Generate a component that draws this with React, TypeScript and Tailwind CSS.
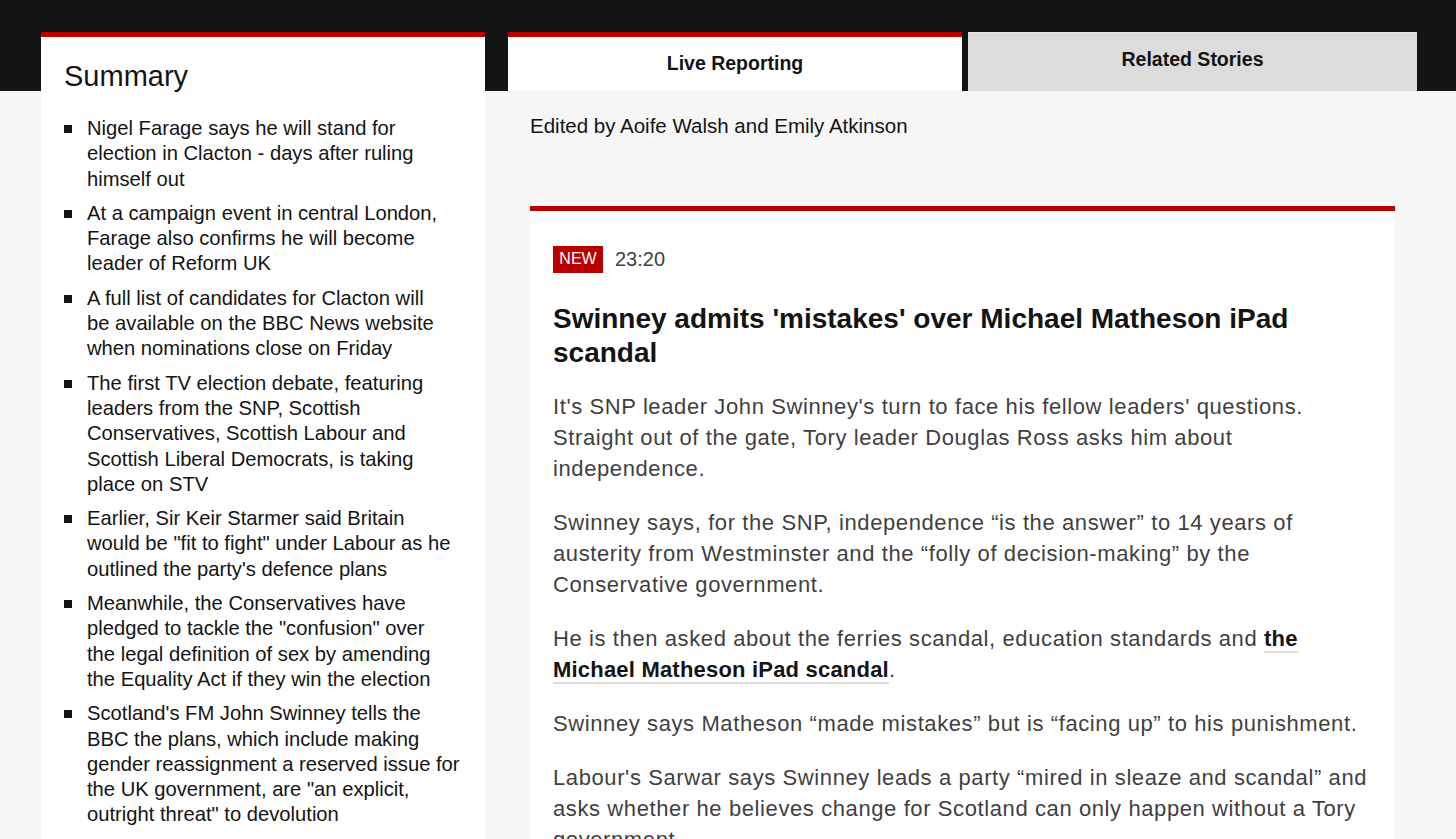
const summary = [
  ['Nigel Farage says he will stand for', 'election in Clacton - days after ruling', 'himself out'],
  ['At a campaign event in central London,', 'Farage also confirms he will become', 'leader of Reform UK'],
  ['A full list of candidates for Clacton will', 'be available on the BBC News website', 'when nominations close on Friday'],
  [
    'The first TV election debate, featuring',
    'leaders from the SNP, Scottish',
    'Conservatives, Scottish Labour and',
    'Scottish Liberal Democrats, is taking',
    'place on STV',
  ],
  ['Earlier, Sir Keir Starmer said Britain', 'would be "fit to fight" under Labour as he', "outlined the party's defence plans"],
  [
    'Meanwhile, the Conservatives have',
    'pledged to tackle the "confusion" over',
    'the legal definition of sex by amending',
    'the Equality Act if they win the election',
  ],
  [
    "Scotland's FM John Swinney tells the",
    'BBC the plans, which include making',
    'gender reassignment a reserved issue for',
    'the UK government, are "an explicit,',
    'outright threat" to devolution',
  ],
]

function Lines({ lines }: { lines: string[] }) {
  return (
    <span className="flex flex-col">
      {lines.map((l) => (
        <span key={l} className="whitespace-nowrap">
          {l}
        </span>
      ))}
    </span>
  )
}

function SummaryCard() {
  return (
    <aside className="w-[444px] shrink-0 border-t-[5px] border-[#b80000] bg-white px-[23px] pt-[22px] pb-10">
      <h2 className="text-[29px] leading-[34px] text-[#141414]">Summary</h2>
      <ul className="mt-[23px] flex flex-col gap-[9px]">
        {summary.map((item) => (
          <li key={item[0]} className="flex text-[20.2px] leading-[25.3px] text-[#141414]">
            <span className="mt-[9px] mr-[15px] h-[8px] w-[8px] shrink-0 bg-[#141414]" />
            <Lines lines={item} />
          </li>
        ))}
      </ul>
    </aside>
  )
}

function Tabs() {
  return (
    <div className="flex gap-[6px]">
      <div className="flex h-[59px] w-[454px] items-center justify-center border-t-[5px] border-[#b80000] bg-white text-[19.5px] font-bold text-[#141414]">
        Live Reporting
      </div>
      <div className="flex h-[59px] w-[449px] items-center justify-center border-t border-[#e4e4e4] bg-[#dcdcdc] pb-[4px] text-[19.5px] font-bold text-[#141414]">
        Related Stories
      </div>
    </div>
  )
}

function Article() {
  return (
    <article className="border-t-[5px] border-[#b80000] bg-white px-[23px] pt-[33px] pb-10">
      <div className="flex items-center gap-[12px]">
        <span className="flex h-[27px] w-[50px] items-center justify-center bg-[#b80000] text-[16px] text-white">
          NEW
        </span>
        <span className="text-[20px] text-[#3f3f42]">23:20</span>
      </div>
      <h3 className="mt-[28px] text-[28px] leading-[34px] font-bold text-[#141414]">
        Swinney admits 'mistakes' over Michael Matheson iPad
        <br />
        scandal
      </h3>
      <div className="mt-[21px] flex flex-col gap-[23px] text-[22px] leading-[31px] tracking-[0.6px] whitespace-nowrap text-[#3f3f42]">
        <p>
          It's SNP leader John Swinney's turn to face his fellow leaders' questions.
          <br />
          Straight out of the gate, Tory leader Douglas Ross asks him about
          <br />
          independence.
        </p>
        <p>
          Swinney says, for the SNP, independence “is the answer” to 14 years of
          <br />
          austerity from Westminster and the “folly of decision-making” by the
          <br />
          Conservative government.
        </p>
        <p>
          He is then asked about the ferries scandal, education standards and{' '}
          <a className="border-b-2 border-[#dcdcdc] font-bold tracking-[0.2px] text-[#141414]" href="#">
            the
            <br />
            Michael Matheson iPad scandal
          </a>
          .
        </p>
        <p>Swinney says Matheson “made mistakes” but is “facing up” to his punishment.</p>
        <p>
          Labour's Sarwar says Swinney leads a party “mired in sleaze and scandal” and
          <br />
          asks whether he believes change for Scotland can only happen without a Tory
          <br />
          government.
        </p>
      </div>
    </article>
  )
}

export default function App() {
  return (
    <div
      className="h-[839px] overflow-hidden bg-[linear-gradient(#141414_0,#141414_91px,#f6f6f6_91px)] pt-[32px] pl-[41px]"
      style={{ fontFamily: '"Liberation Sans", Arial, sans-serif' }}
    >
      <div className="flex gap-[23px]">
        <SummaryCard />
        <main className="w-[909px]">
          <Tabs />
          <div className="px-[22px]">
            <p className="pt-[23px] text-[20.5px] leading-[24px] text-[#141414]">
              Edited by Aoife Walsh and Emily Atkinson
            </p>
            <div className="mt-[68px]">
              <Article />
            </div>
          </div>
        </main>
      </div>
    </div>
  )
}
